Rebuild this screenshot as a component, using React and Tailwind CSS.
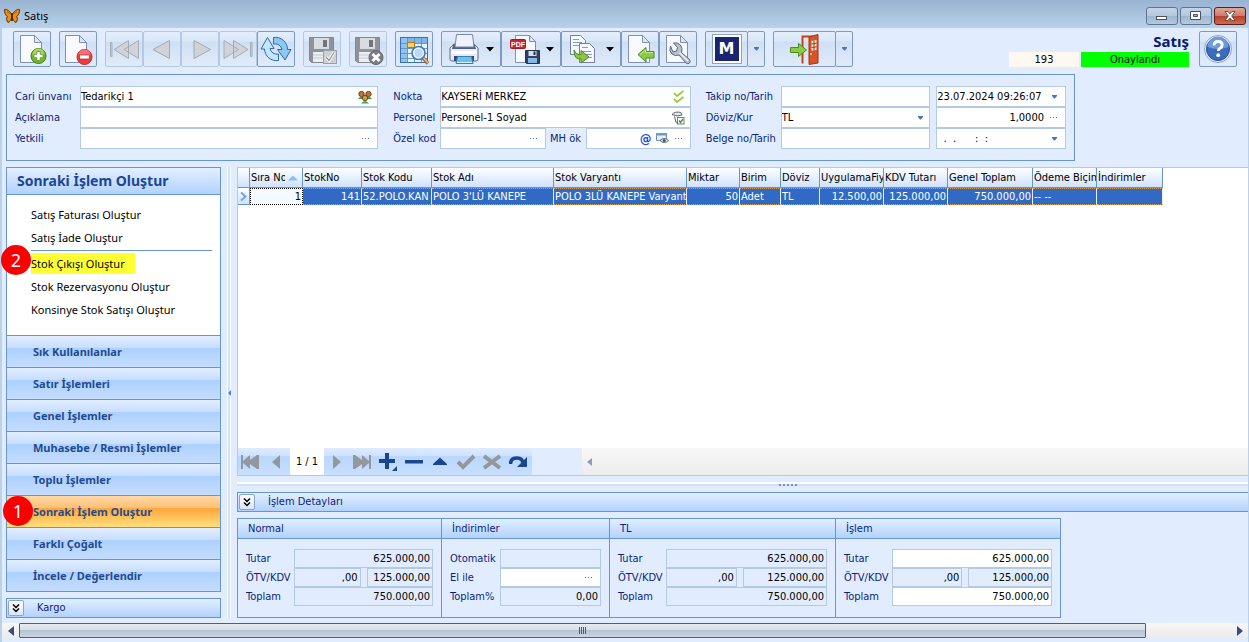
import React from "react";

const F_BORDER = "border-[#b4c9e4]";

/* ---------- toolbar drawings ---------- */

function Page({ x = 0 }) {
  return (
    <g transform={`translate(${x} 0)`}>
      <path d="M5.500 2.500h14l7 7v20h-21z" fill="#f7faff" stroke="#7f8fb5" />
      <path d="M19.500 2.500v7h7z" fill="#dfe6f5" stroke="#7f8fb5" strokeLinejoin="round" />
    </g>
  );
}

function Icon({ children, w = 32 }) {
  return (
    <svg width={w} height="32" viewBox={`0 0 ${w} 32`} fill="none" aria-hidden="true" className="shrink-0">
      {children}
    </svg>
  );
}

const NewIcon = () => (
  <Icon>
    <Page x={-1} />
    <circle cx="22.500" cy="23" r="7.500" fill="#76b82c" stroke="#3f7d16" />
    <path d="M16.500 21.500a6 6 0 0 1 12 0q-6 3-12 0z" fill="#a5d75c" />
    <path d="M20.800 18.500h3.400v2.800h2.800v3.400h-2.800v2.800h-3.400v-2.800h-2.800v-3.400h2.800z" fill="#fff" stroke="#4c8c1e" strokeWidth=".7" />
  </Icon>
);
const DeleteIcon = () => (
  <Icon>
    <Page x={-2} />
    <circle cx="22.500" cy="24" r="7.500" fill="#f23c41" stroke="#c9252a" />
    <path d="M16.500 22.500a6 6 0 0 1 12 0q-6 3-12 0z" fill="#ff7073" />
    <rect x="17.500" y="22" width="10" height="4" fill="#fff" stroke="#b22126" strokeWidth=".7" />
  </Icon>
);
const FirstIcon = () => (
  <Icon>
    <g fill="#d0d4da" stroke="#a6acb5" strokeLinejoin="round">
      <path d="M2.500 9.500h1.500v14H2.500z" />
      <path d="M20.500 7.500v18L6 16.500zM30.500 7.500v18L16 16.500z" />
    </g>
  </Icon>
);
const PrevIcon = () => (
  <Icon>
    <path d="M23.500 7.500v18L7 16.500z" fill="#cfd3d9" stroke="#a3a9b3" strokeLinejoin="round" />
  </Icon>
);
const NextIcon = () => (
  <Icon>
    <path d="M10 7.500v18l16.500-9z" fill="#cfd3d9" stroke="#a3a9b3" strokeLinejoin="round" />
  </Icon>
);
const LastIcon = () => (
  <Icon>
    <g fill="#d0d4da" stroke="#a6acb5" strokeLinejoin="round">
      <path d="M28.500 9.500H30v14h-1.500z" />
      <path d="M2 7.500v18l14.500-9zM11.500 7.500v18l14.500-9z" />
    </g>
  </Icon>
);
const RefreshIcon = () => (
  <Icon>
    <g fill="#8cc8ef" stroke="#2a6db0" strokeLinejoin="round">
      <path d="M13.500 4.500a12 12 0 0 1 14 12H31L25 27l-7.500-10.500H22A7 7 0 0 0 13.500 11z" />
      <path d="M18.500 27.500A12 12 0 0 1 4.500 16H1L7.500 4.500l6.500 11h-4a7 7 0 0 0 8.500 5.500z" fill="#c5e6fa" />
    </g>
  </Icon>
);
function Floppy({ children }) {
  return (
    <Icon>
      <path d="M3.500 4.500h24v25h-22l-2-2z" fill="#8d929b" stroke="#83878f" />
      <rect x="8" y="5" width="15" height="11" fill="#d9dce1" />
      <rect x="17" y="7" width="4" height="7" fill="#70757e" />
      <rect x="7" y="19" width="16" height="10" fill="#eceef1" />
      <path d="M7 22h16M7 25h16" stroke="#c6cad0" />
      {children}
    </Icon>
  );
}
const SaveOkIcon = () => (
  <Floppy>
    <rect x="17.500" y="17.500" width="13" height="13" fill="#cdd1d7" stroke="#9aa0a9" />
    <path d="M20 24l3 3.500 5-8" stroke="#fff" strokeWidth="3" />
    <path d="M20 24l3 3.500 5-8" stroke="#8a9099" strokeWidth="1.200" />
  </Floppy>
);
const SaveCancelIcon = () => (
  <Floppy>
    <circle cx="24" cy="24.500" r="7" fill="#7b7f86" stroke="#65696f" />
    <path d="M20.500 21l7 7m0-7l-7 7" stroke="#fff" strokeWidth="2.800" />
  </Floppy>
);
const GridSearchIcon = () => (
  <Icon>
    <rect x="2.500" y="4.500" width="27" height="25" fill="#eaf4fd" stroke="#3c6fae" />
    <rect x="3" y="5" width="26" height="5" fill="#7db6e8" />
    <rect x="3" y="5" width="6" height="24" fill="#8fc3ee" />
    <path d="M9.500 5v24M16.500 5v24M23.500 5v24M3 10.500h26M3 15.500h26M3 20.500h26M3 25.500h26" stroke="#5f97cf" />
    <rect x="9.500" y="9.500" width="7" height="5" fill="#ffcf6b" stroke="#b77a10" />
    <circle cx="20.500" cy="20" r="6.500" fill="#b7dbf7" stroke="#4a78b8" strokeWidth="1.600" />
    <circle cx="20.500" cy="20" r="4.800" stroke="#eef7ff" strokeWidth="1.200" />
    <path d="M25 25l5 5.500" stroke="#9c6a3d" strokeWidth="3.500" />
    <path d="M25.500 25l4.500 5" stroke="#f1b66a" strokeWidth="1.500" />
  </Icon>
);
const PrintIcon = () => (
  <Icon>
    <path d="M6 11h20l4 4v11q0 2-2 2H4q-2 0-2-2V15z" fill="#e7ebf5" stroke="#5d6b94" />
    <path d="M5.500 11h21l1.500 5H4z" fill="#515c80" />
    <path d="M8.500 1.500h16L26 14H7z" fill="#eef2fc" stroke="#7886ac" />
    <path d="M3 18h26v3H3z" fill="#fff" />
    <path d="M6 23h20v5H6z" fill="#3c4668" />
    <path d="M9.500 23.500h14l1.500 7H8z" fill="#6cc0f2" stroke="#3a7bb8" />
    <path d="M9 29.500h15" stroke="#d9f0ff" />
  </Icon>
);
const PdfIcon = () => (
  <Icon>
    <path d="M7.500 2.500h14l6 6v21h-20z" fill="#f6f9ff" stroke="#7f8fb5" />
    <path d="M21.500 2.500v6h6z" fill="#dfe6f5" stroke="#7f8fb5" />
    <rect x="2.500" y="6.500" width="15" height="9" rx="1" fill="#d2232a" stroke="#a8161c" />
    <text x="10" y="13.500" textAnchor="middle" fontSize="7" fontWeight="700" fill="#fff" className="font-['Liberation_Sans',sans-serif]">PDF</text>
    <path d="M17.500 17.500h14v13h-13l-1-1z" fill="#33405f" stroke="#26314d" />
    <rect x="20.500" y="18" width="8" height="5" fill="#d7deec" />
    <rect x="25.500" y="18.500" width="2" height="3.500" fill="#26314d" />
    <rect x="20" y="25" width="9" height="5" fill="#7fb9e6" />
  </Icon>
);
const TransferIcon = () => (
  <Icon>
    <g fill="#f6f9ff" stroke="#6f7fa8">
      <path d="M2.500 2.500h10l5 5v14h-15z" />
      <path d="M11.500 10.500h10l5 5v14h-15z" />
    </g>
    <path d="M5 6.500h6M5 9.500h9M5 12.500h6M14 14.500h6M14 18.500h9M18 21.500h6M18 24.500h6" stroke="#7d9bd0" />
    <path d="M6 17q2 5 7 4.500v-4l8 6.500-8 6v-4Q6 27 6 17z" fill="#8cc63e" stroke="#4e8a1a" />
  </Icon>
);
const ImportIcon = () => (
  <Icon>
    <Page x={-1} />
    <path d="M14 21.500l8-7v4h8v6.500h-8v4z" fill="#8ecb45" stroke="#4c8a1c" strokeLinejoin="round" />
    <path d="M16 21.500l5.500-4.500v2.500H29" stroke="#c7ea93" />
  </Icon>
);
const WrenchIcon = () => (
  <Icon>
    <path d="M4.500 2.500h14l7 7v20h-21z" fill="#f7faff" stroke="#7f8fb5" />
    <path d="M18.500 2.500v7h7z" fill="#dfe6f5" stroke="#7f8fb5" />
    <path d="M8.500 13q-2 5 1.500 8 3 2.500 7 1l7 8q2 1.500 3.500 0t0-3.500l-8-7q1.500-4-1-7.500-3-3-7-2l4 4.500-1 3.500-3.500 1z" fill="#b9c1cf" stroke="#5e6880" strokeLinejoin="round" />
    <path d="M17.500 19.500l8.500 8.500" stroke="#e9edf4" strokeWidth="1.500" />
  </Icon>
);
const DoorIcon = () => (
  <Icon>
    <path d="M13.500 30.500V3.500h15" stroke="#c8401c" strokeWidth="2" />
    <path d="M20 30.500V4l9-2.500v28.500l-9 1.500z" fill="#d8532a" stroke="#a8330f" />
    <path d="M22.500 8l5-1v10l-5 .8z" fill="#f7ead9" />
    <path d="M25 7.500v10M22.500 11l5-.8M22.500 14.500l5-.7" stroke="#a8330f" />
    <circle cx="22" cy="21" r="1" fill="#f7d9a9" />
    <path d="M1.500 14.500h8V10.500l8 6.500-8 6.500v-4h-8z" fill="#8ecb45" stroke="#4c8a1c" strokeLinejoin="round" />
  </Icon>
);
const HelpIcon = () => (
  <Icon>
    <circle cx="16" cy="16" r="13.500" fill="#e6eefb" stroke="#8aa3cf" />
    <circle cx="16" cy="16" r="11.500" fill="#3a6dbb" stroke="#1f4b92" />
    <path d="M5.500 14a10.500 10.500 0 0 1 21 0q-10 4-21 0z" fill="#6e9ad8" />
    <path d="M12 12.500q0-4 4.200-4 4 0 4 3.500 0 2-2.200 3.200-1.800 1-1.800 2.800" stroke="#fff" strokeWidth="2.800" />
    <circle cx="16.200" cy="22.200" r="1.900" fill="#fff" />
  </Icon>
);

const Butterfly = () => (
  <svg width="16" height="16" viewBox="0 0 16 16" aria-hidden="true" className="shrink-0">
    <path d="M8 7C6 3 3 1 .5 1.500c0 3 1 6 3 7-1.500 1.500-1 4.500.5 6 2-.5 3.500-3 4-6 .5 3 2 5.500 4 6 1.500-1.500 2-4.500.5-6 2-1 3-4 3-7C13 1 10 3 8 7z" fill="#f08c12" stroke="#5a3208" strokeWidth="1" />
    <path d="M8 7L3 3.500M8 7l5-3.500" stroke="#a35708" strokeWidth=".8" />
    <path d="M8 5v8" stroke="#3b2206" strokeWidth="1.600" />
  </svg>
);

/* ---------- small controls ---------- */

function Tri({ className }) {
  return (
    <svg width="8" height="5" viewBox="0 0 8 5" aria-hidden="true" className={"shrink-0 " + className}>
      <path d="M0 0h8L4 4.500z" fill="currentColor" />
    </svg>
  );
}

function SmallTri() {
  return (
    <svg width="5" height="4" viewBox="0 0 5 4" aria-hidden="true" className="shrink-0 text-[#4a77b4]">
      <path d="M0 0h5v1L3 3.500H2L0 1z" fill="currentColor" />
    </svg>
  );
}

const TOOL = "flex h-9 items-center justify-center rounded-[2px] border bg-[linear-gradient(#e4eefb,#dae7f8_26%,#cfdff3_30%,#e0ebfa)] ";

function Tool({ label, icon, disabled }) {
  return (
    <button
      type="button"
      aria-label={label}
      disabled={disabled}
      className={TOOL + "w-[38px] " + (disabled ? "border-[#b5c8e3]" : "border-[#7d9ac6]")}
    >
      {icon}
    </button>
  );
}

function MenuTool({ label, icon }) {
  return (
    <button type="button" aria-label={label} aria-haspopup="menu" className={TOOL + "w-[60px] gap-[6px] border-[#7d9ac6]"}>
      {icon}
      <Tri className="text-black" />
    </button>
  );
}

function SplitTool({ label, icon, width }) {
  return (
    <div className="flex">
      <button type="button" aria-label={label} className={TOOL + "border-[#7d9ac6] " + width}>
        {icon}
      </button>
      <button type="button" aria-label={label + " seçenekleri"} className={TOOL + "-ml-px w-[18px] border-[#7d9ac6]"}>
        <SmallTri />
      </button>
    </div>
  );
}

const Dots = () => (
  <svg width="8" height="2" viewBox="0 0 8 2" aria-hidden="true">
    <path d="M0 0h1v1H0zM3 0h1v1H3zM6 0h1v1H6z" fill="#4a77b4" />
  </svg>
);

const PeopleIcon = () => (
  <svg width="14" height="14" viewBox="0 0 14 14" aria-hidden="true">
    <path d="M0 9q3-4 6 0zM8 9q3-4 6 0z" fill="#2e9b2e" />
    <path d="M3 13.500q4-5 8 0z" fill="#3caa34" />
    <circle cx="3.500" cy="4" r="2.700" fill="#b8763a" stroke="#5a3210" strokeWidth=".8" />
    <circle cx="10.500" cy="4" r="2.700" fill="#b8763a" stroke="#5a3210" strokeWidth=".8" />
    <circle cx="7" cy="8" r="2.700" fill="#d09850" stroke="#5a3210" strokeWidth=".8" />
  </svg>
);
const ChecksIcon = () => (
  <svg width="12" height="14" viewBox="0 0 12 14" fill="none" aria-hidden="true">
    <path d="M1 3l3 3 6.500-5M1 9l3 3 6.500-5" stroke="#9ccb4a" strokeWidth="1.800" />
  </svg>
);
const UserCheckIcon = () => (
  <svg width="14" height="14" viewBox="0 0 14 14" fill="none" aria-hidden="true">
    <path d="M1 3.500Q4 0 10 1.500l1 2.500-5 1zM3.500 5.500l1.500 6 2 1" fill="#e3e6ea" stroke="#5f6670" />
    <rect x="6.500" y="6.500" width="6.500" height="6.500" fill="#fff" stroke="#6f7a8c" />
    <path d="M8 9.500l1.500 2L12 8" stroke="#3f9a1e" strokeWidth="1.400" />
  </svg>
);
const CardEyeIcon = () => (
  <svg width="13" height="11" viewBox="0 0 13 11" fill="none" aria-hidden="true">
    <path d="M.5.500h10v7H.5z" fill="#e8f1fb" stroke="#6b8fbf" />
    <path d="M0 0h11v2.500H0z" fill="#6b9ad0" />
    <path d="M4 7.500q4-4 8.500 0-4.500 4-8.500 0z" fill="#f3f5f8" stroke="#5d6678" />
    <circle cx="8.200" cy="7.500" r="1.500" fill="#4a5468" />
  </svg>
);

function Field({ id, label, value = "", right, soft, short, children, className = "" }) {
  return (
    <div
      className={`flex min-w-0 items-center gap-1 border ${F_BORDER} ${short ? "h-[19px]" : "h-[21px]"} ${
        children ? "pr-[5px]" : "pr-[2px]"
      } ${soft ? "bg-[#e1edfe]" : "bg-white"} ${className}`}
    >
      <input
        id={id}
        type="text"
        aria-label={label}
        defaultValue={value}
        className={"h-full w-full min-w-0 flex-1 bg-transparent text-black outline-none " + (right ? "text-right" : "")}
      />
      {children}
    </div>
  );
}

function Mini({ label, children }) {
  return (
    <button type="button" aria-label={label} className="flex h-4 min-w-3 shrink-0 items-center justify-center">
      {children}
    </button>
  );
}

function L({ htmlFor, short, children }) {
  return (
    <label htmlFor={htmlFor} className={"flex items-center whitespace-nowrap text-[#0b1f7a] " + (short ? "h-[19px]" : "h-[21px]")}>
      {children}
    </label>
  );
}

const Expand = ({ label }) => (
  <button type="button" aria-label={label} className="flex size-4 items-center justify-center rounded-[2px] border border-[#8aa5cc] bg-linear-to-b from-white to-[#d9e6f8]">
    <svg width="8" height="9" viewBox="0 0 8 9" fill="none" aria-hidden="true">
      <path d="M1 .5l3 3 3-3M1 4.500l3 3 3-3" stroke="#000" strokeWidth="1.500" />
    </svg>
  </button>
);

/* ---------- header form ---------- */

function HeaderForm() {
  return (
    <section className="mx-1 flex w-full max-w-[1069px] border border-[#6695d0] px-2 py-[11px]">
      <div className="grid flex-[364] grid-cols-[65px_1fr]">
        <L htmlFor="cari">Cari ünvanı</L>
        <Field id="cari" value="Tedarikçi 1"><Mini label="Cari seç"><PeopleIcon /></Mini></Field>
        <L htmlFor="aciklama">Açıklama</L>
        <Field id="aciklama" />
        <L htmlFor="yetkili">Yetkili</L>
        <Field id="yetkili"><Mini label="Yetkili seç"><Dots /></Mini></Field>
      </div>
      <div className="ml-[15px] grid flex-[298] grid-cols-[47px_1fr]">
        <L htmlFor="nokta">Nokta</L>
        <Field id="nokta" value="KAYSERİ MERKEZ"><Mini label="Nokta seç"><ChecksIcon /></Mini></Field>
        <L htmlFor="personel">Personel</L>
        <Field id="personel" value="Personel-1 Soyad"><Mini label="Personel seç"><UserCheckIcon /></Mini></Field>
        <L htmlFor="ozel">Özel kod</L>
        <div className="flex">
          <Field id="ozel" className="flex-1"><Mini label="Özel kod seç"><Dots /></Mini></Field>
          <div className="flex w-10 justify-center"><L htmlFor="mh">MH ök</L></div>
          <Field id="mh" className="flex-1">
            <Mini label="E-posta"><span className="text-[13px] leading-4 font-bold text-[#2448e0]">@</span></Mini>
            <Mini label="Göster"><CardEyeIcon /></Mini>
            <Mini label="MH ök seç"><Dots /></Mini>
          </Field>
        </div>
      </div>
      <div className="ml-[15px] grid flex-[361] grid-cols-[75px_156fr_130fr]">
        <L htmlFor="takip">Takip no/Tarih</L>
        <Field id="takip" className="mr-[6px]" />
        <Field label="Takip tarihi" value="23.07.2024 09:26:07"><Mini label="Tarih seç"><SmallTri /></Mini></Field>
        <L htmlFor="doviz">Döviz/Kur</L>
        <div className={`mr-[6px] flex h-[21px] min-w-0 items-center border bg-white pr-[6px] ${F_BORDER}`}>
          <select id="doviz" defaultValue="TL" className="h-full min-w-0 flex-1 appearance-none bg-transparent text-black outline-none">
            <option>TL</option>
          </select>
          <SmallTri />
        </div>
        <Field label="Kur" value="1,0000" right><Mini label="Kur seç"><Dots /></Mini></Field>
        <L htmlFor="belge">Belge no/Tarih</L>
        <Field id="belge" className="mr-[6px]" />
        <Field label="Belge tarihi" value="  .  .      :  :"><Mini label="Belge tarihi seç"><SmallTri /></Mini></Field>
      </div>
    </section>
  );
}

/* ---------- side bar ---------- */

const GROUPS = [
  "Sık Kullanılanlar",
  "Satır İşlemleri",
  "Genel İşlemler",
  "Muhasebe / Resmi İşlemler",
  "Toplu İşlemler",
  "Sonraki İşlem Oluştur",
  "Farklı Çoğalt",
  "İncele / Değerlendir",
];

function Callout({ n, className }) {
  return (
    <span className={"absolute flex size-[30px] items-center justify-center rounded-full bg-[#fb0000] text-[18px] font-normal text-white " + className}>
      {n}
    </span>
  );
}

const LINK = "block text-left leading-[23px] text-black";

function Sidebar() {
  return (
    <aside className="flex w-[215px] shrink-0 flex-col gap-[6px]">
      <div className="flex flex-1 flex-col border border-[#6695d0] bg-white font-['Noto_Sans',sans-serif]">
        <h2 className="border-b border-[#6695d0] bg-linear-to-b from-[#e3effe] to-[#b1d2fe] px-[10px] text-[14px] leading-[26px] font-bold text-[#1c4695]">
          Sonraki İşlem Oluştur
        </h2>
        <nav className="flex-1 pt-2 pr-2 pl-6">
          <a href="#fatura" className={LINK}>Satış Faturası Oluştur</a>
          <a href="#iade" className={LINK}>Satış İade Oluştur</a>
          <div className="relative mt-px border-t border-[#6695d0] pt-[2px]">
            <a href="#cikis" className="block w-[104px] bg-[#ffff33] leading-[21px] whitespace-nowrap text-black">Stok Çıkışı Oluştur</a>
            <Callout n="2" className="-top-[6px] -left-[30px]" />
          </div>
          <a href="#rezervasyon" className={LINK + " mt-px"}>Stok Rezervasyonu Oluştur</a>
          <a href="#konsinye" className={LINK}>Konsinye Stok Satışı Oluştur</a>
        </nav>
        {GROUPS.map((g) => {
          const active = g === "Sonraki İşlem Oluştur";
          return (
            <button
              key={g}
              type="button"
              className={
                "relative h-8 border-t border-[#6695d0] pl-[26px] text-left font-bold text-[#1f4c8f] " +
                (active
                  ? "bg-[linear-gradient(#ffd9a6,#ffc076_38%,#ffa63c_40%,#ffdf7c)]"
                  : "bg-[linear-gradient(#e2eefe,#c8defe_38%,#aed0fe_40%,#c5ddfe)]")
              }
            >
              {g}
              {active && <Callout n="1" className="top-0 -left-[4px]" />}
            </button>
          );
        })}
      </div>
      <div className="flex h-5 items-center gap-[13px] border border-[#6695d0] bg-linear-to-b from-[#e3effe] to-[#b1d2fe] pl-px text-[#0b1f7a]">
        <Expand label="Kargo bölümünü aç" />
        Kargo
      </div>
    </aside>
  );
}

/* ---------- stock table ---------- */

const COLS = [
  ["Sıra No", "w-[53px]", "1", true],
  ["StokNo", "w-[59px]", "141", true],
  ["Stok Kodu", "w-[70px]", "52.POLO.KAN", false],
  ["Stok Adı", "w-[122px]", "POLO 3'LÜ KANEPE", false],
  ["Stok Varyantı", "w-[133px]", "POLO 3LÜ KANEPE Varyant", false],
  ["Miktar", "w-[53px]", "50", true],
  ["Birim", "w-[41px]", "Adet", false],
  ["Döviz", "w-[39px]", "TL", false],
  ["UygulamaFiy", "w-[64px]", "12.500,00", true],
  ["KDV Tutarı", "w-[64px]", "125.000,00", true],
  ["Genel Toplam", "w-[85px]", "750.000,00", true],
  ["Ödeme Biçim", "w-[64px]", "-- --", false],
  ["İndirimler", "w-[66px]", "", false],
];

const HEAD = "border-r border-b border-[#6695d0] bg-linear-to-b from-white to-[#cfe2fd] p-0 ";

function StockTable() {
  return (
    <table className="w-[925px] table-fixed border-separate border-spacing-0 text-black">
      <thead>
        <tr className="h-5">
          <th aria-label="Satır" className={HEAD + "w-3"} />
          {COLS.map(([h, w], i) => (
            <th key={h} className={HEAD + "text-left font-normal " + w}>
              <div className="flex items-center pl-px">
                <span className="min-w-0 flex-1 overflow-hidden whitespace-nowrap">{h}</span>
                {i === 0 && (
                  <svg width="17" height="6" viewBox="0 0 17 6" aria-hidden="true" className="shrink-0">
                    <path d="M3 5.500h10L8 .5z" fill="#8dbcf5" />
                  </svg>
                )}
              </div>
            </th>
          ))}
        </tr>
      </thead>
      <tbody>
        <tr className="h-[17px]">
          <td className={HEAD}>
            <svg width="11" height="11" viewBox="0 0 11 11" fill="none" aria-hidden="true">
              <path d="M3 1.500L7.500 5.500 3 9.500" stroke="#6fa4ea" strokeWidth="2" />
            </svg>
          </td>
          {COLS.map(([h, , v, right], i) => (
            <td
              key={h}
              className={
                "overflow-hidden border-y border-dotted px-px py-0 leading-[15px] whitespace-nowrap " +
                (i === 0
                  ? "border-x border-black bg-[#f5faff] text-black "
                  : "border-r border-y-[#d9a05a] border-r-[#e6effb] bg-[#316ac5] text-white [border-right-style:solid] ") +
                (right ? "text-right" : "text-left")
              }
            >
              {v}
            </td>
          ))}
        </tr>
      </tbody>
    </table>
  );
}

function NavBtn({ label, children, w = "w-[26px]" }) {
  return (
    <button type="button" aria-label={label} className={"flex h-full items-center justify-center " + w}>
      <svg width="20" height="20" viewBox="0 0 20 20" fill="none" aria-hidden="true">{children}</svg>
    </button>
  );
}

function Navigator() {
  const G = "#94979c";
  const B = "#1a4591";
  const bg = "flex h-full bg-[linear-gradient(#dfecfe,#cfe2fe_28%,#bad7fe_32%,#c8dffe)] ";
  return (
    <div className="flex h-[27px] items-center">
      <div className={bg + "w-[52px]"}>
        <NavBtn label="İlk"><path d="M0 3h2v6l7-6v5l7-5h2v14h-2l-7-5v5l-7-6v6H0z" fill={G} /></NavBtn>
        <NavBtn label="Önceki"><path d="M13 3v14L5 10z" fill={G} /></NavBtn>
      </div>
      <span className="w-[34px] text-center text-black">1 / 1</span>
      <div className={bg + "w-[208px]"}>
        <NavBtn label="Sonraki"><path d="M6 3v14l8-7z" fill={G} /></NavBtn>
        <NavBtn label="Son"><path d="M18 3h-2v6L9 3v5L2 3H0v14h2l7-5v5l7-6v6h2z" fill={G} /></NavBtn>
        <NavBtn label="Ekle"><path d="M6 1h4v6h6v4h-6v6H6v-6H0V7h6zM18 14v5h-5z" fill={B} /></NavBtn>
        <NavBtn label="Sil"><path d="M0 8h18v3.500H0z" fill={B} /></NavBtn>
        <NavBtn label="Düzenle"><path d="M9 5.500l7 6.500v1H2v-1z" fill={B} /></NavBtn>
        <NavBtn label="Onayla"><path d="M1 10l5 5L17 4" stroke={G} strokeWidth="4" /></NavBtn>
        <NavBtn label="İptal"><path d="M1 4l16 12M17 4L1 16" stroke={G} strokeWidth="4" /></NavBtn>
        <NavBtn label="Yenile">
          <path d="M1.500 12q0-6 6.500-6 6 0 6 6" stroke={B} strokeWidth="3.500" />
          <path d="M18 5v10H8z" fill={B} />
        </NavBtn>
      </div>
      <div className="h-full w-[50px] bg-[#e1edfe]" />
      <div className="flex h-full flex-1 items-center bg-linear-to-b from-[#f8f8f8] to-[#ececec] pl-[5px]">
        <svg width="5" height="8" viewBox="0 0 5 8" aria-hidden="true"><path d="M5 0v8L0 4z" fill="#8e9cc2" /></svg>
      </div>
    </div>
  );
}

/* ---------- totals ---------- */

function Box({ title, w, cols, children }) {
  return (
    <section className={"-mr-px flex flex-col border border-[#6695d0] " + w}>
      <h3 className="h-5 border-b border-[#6695d0] bg-linear-to-b from-[#e3effe] to-[#b1d2fe] pl-[10px] leading-[19px] text-[#0b1f7a]">{title}</h3>
      <div className={"grid px-2 pt-[10px] pb-[11px] " + cols}>{children}</div>
    </section>
  );
}

function Totals({ title, white, w, split = "flex-[84]" }) {
  return (
    <Box title={title} w={w} cols="grid-cols-[48px_1fr]">
      <L short htmlFor={title + "-tutar"}>Tutar</L>
      <Field short id={title + "-tutar"} value="625.000,00" right soft={!white} />
      <L short htmlFor={title + "-otv"}>ÖTV/KDV</L>
      <div className="flex gap-[6px]">
        <Field short id={title + "-otv"} value=",00" right soft className="flex-[70]" />
        <Field short label={title + " KDV"} value="125.000,00" right soft className={split} />
      </div>
      <L short htmlFor={title + "-toplam"}>Toplam</L>
      <Field short id={title + "-toplam"} value="750.000,00" right soft={!white} />
    </Box>
  );
}

function Discounts() {
  return (
    <Box title="İndirimler" w="w-[169px]" cols="grid-cols-[50px_1fr]">
      <L short htmlFor="oto">Otomatik</L>
      <Field short id="oto" soft />
      <L short htmlFor="elile">El ile</L>
      <Field short id="elile"><Mini label="El ile seç"><Dots /></Mini></Field>
      <L short htmlFor="yuzde">Toplam%</L>
      <Field short id="yuzde" value="0,00" right soft />
    </Box>
  );
}

/* ---------- window ---------- */

const WIN = "flex h-[18px] w-8 items-center justify-center rounded-[3px] border ";

export default function App() {
  return (
    <div className="flex min-h-screen flex-col bg-[#b9d1ea] font-['DejaVu_Sans_Condensed','Noto_Sans',sans-serif] text-[11px] leading-[14px]">
      <header className="flex h-7 items-end gap-1 bg-linear-to-b from-[#99b4d1] to-[#b9d1ea] pr-[3px] pl-1">
        <div className="flex h-6 flex-1 items-center gap-1">
          <Butterfly />
          <h1 className="font-['Noto_Sans',sans-serif] text-black">Satış</h1>
        </div>
        <div className="flex gap-[2px] pb-[3px]">
          <button type="button" aria-label="Küçült" className={WIN + "border-[#5d7590] bg-[linear-gradient(#c3d4e6,#b4c8de_50%,#9db5cf_50%,#b5cade)]"}>
            <svg width="12" height="10" viewBox="0 0 12 10" aria-hidden="true"><rect x=".5" y="5.500" width="10" height="3" fill="#fff" stroke="#4a525e" /></svg>
          </button>
          <button type="button" aria-label="Ekranı kapla" className={WIN + "border-[#5d7590] bg-[linear-gradient(#c3d4e6,#b4c8de_50%,#9db5cf_50%,#b5cade)]"}>
            <svg width="12" height="10" viewBox="0 0 12 10" aria-hidden="true"><path d="M.5.500h10v8H.5z" fill="#fff" stroke="#4a525e" /><path d="M3.500 3.500h4v2h-4z" fill="#9db5cf" stroke="#4a525e" /></svg>
          </button>
          <button type="button" aria-label="Kapat" className={WIN + "border-[#5b1f1a] bg-[linear-gradient(#e0a598,#d07a68_50%,#b8402c_50%,#d06a4c)]"}>
            <svg width="12" height="10" viewBox="0 0 12 10" aria-hidden="true"><path d="M1 .5h3l2 2.500L8 .5h3L7.700 5 11 9.500H8L6 7 4 9.500H1L4.300 5z" fill="#fff" stroke="#4d3a40" strokeWidth=".8" /></svg>
          </button>
        </div>
      </header>

      <main className="mr-px ml-[2px] flex flex-1 flex-col bg-[#e1edfe]">
        <div className="flex items-center gap-2 pt-[3px] pr-[11px] pb-[7px] pl-[11px]">
          <Tool label="Yeni" icon={<NewIcon />} />
          <Tool label="Sil" icon={<DeleteIcon />} />
          <div className="flex">
            <Tool label="İlk kayıt" icon={<FirstIcon />} disabled />
            <Tool label="Önceki kayıt" icon={<PrevIcon />} disabled />
            <Tool label="Sonraki kayıt" icon={<NextIcon />} disabled />
            <Tool label="Son kayıt" icon={<LastIcon />} disabled />
            <Tool label="Yenile" icon={<RefreshIcon />} />
          </div>
          <Tool label="Kaydet" icon={<SaveOkIcon />} disabled />
          <Tool label="Vazgeç" icon={<SaveCancelIcon />} disabled />
          <Tool label="Listele" icon={<GridSearchIcon />} />
          <div className="flex">
            <MenuTool label="Yazdır" icon={<PrintIcon />} />
            <MenuTool label="PDF kaydet" icon={<PdfIcon />} />
            <MenuTool label="Aktar" icon={<TransferIcon />} />
            <Tool label="İçeri al" icon={<ImportIcon />} />
            <Tool label="Ayarlar" icon={<WrenchIcon />} />
          </div>
          <SplitTool
            label="M"
            width="w-[43px]"
            icon={
              <span className="flex size-[30px] items-center justify-center border border-[#8fa3c8] bg-white">
                <span className="flex size-6 items-center justify-center bg-[#1b2470] font-['DejaVu_Sans',sans-serif] text-[16px] font-bold text-white">M</span>
              </span>
            }
          />
          <SplitTool label="Çıkış" width="w-[63px]" icon={<DoorIcon />} />
          <div className="mr-[2px] ml-auto flex flex-col items-end">
            <strong className="font-['Noto_Sans',sans-serif] text-[15px] leading-[21px] text-[#0a1a6e]">Satış</strong>
            <div className="flex gap-[2px] text-center leading-[15px] text-black">
              <span className="w-[70px] bg-[#fdf9f0]">193</span>
              <span className="w-[108px] bg-[#00ff00]">Onaylandı</span>
            </div>
          </div>
          <Tool label="Yardım" icon={<HelpIcon />} />
        </div>

        <HeaderForm />

        <div className="mt-[6px] flex flex-1">
          <div className="flex pl-1">
            <Sidebar />
          </div>
          <div className="flex w-4 items-center justify-center">
            <div className="flex h-full w-1 items-center border-x border-white bg-[#cfe1fb]">
              <svg width="4" height="6" viewBox="0 0 4 6" aria-hidden="true" className="shrink-0"><path d="M3 0v6L0 3z" fill="#4a86d8" /></svg>
            </div>
          </div>
          <div className="flex min-w-0 flex-1 flex-col">
            <div className={`flex flex-1 flex-col border border-r-0 bg-white ${F_BORDER}`}>
              <div className="min-w-0 flex-1 overflow-hidden">
                <StockTable />
              </div>
              <Navigator />
            </div>
            <div className="my-[6px] flex h-1 items-center justify-center border-t-2 border-white bg-[#cfe1fb] pl-[90px]">
              <svg width="20" height="3" viewBox="0 0 20 3" aria-hidden="true" className="shrink-0"><path d="M1 0h2v2H1zM5 0h2v2H5zM9 0h2v2H9zM13 0h2v2h-2zM17 0h2v2h-2z" fill="#6695d0" /></svg>
            </div>
            <div className="flex h-5 items-center gap-[13px] border border-r-0 border-[#6695d0] bg-linear-to-b from-[#e3effe] to-[#b1d2fe] pl-px text-[#0b1f7a]">
              <Expand label="İşlem detaylarını daralt" />
              İşlem Detayları
            </div>
            <div className="mt-[6px] flex">
              <Totals title="Normal" w="w-[205px]" split="flex-[70]" />
              <Discounts />
              <Totals title="TL" w="w-[227px]" />
              <Totals title="İşlem" white w="w-[226px]" />
            </div>
          </div>
        </div>

        <div className="mt-[5px] mb-1 flex h-[15px] items-center bg-linear-to-b from-[#f7f7f7] to-[#ebebeb]">
          <button type="button" aria-label="Sola kaydır" className="flex w-[17px] justify-center">
            <svg width="6" height="10" viewBox="0 0 6 10" aria-hidden="true"><path d="M6 0v10L0 5z" fill="#3d4b78" /></svg>
          </button>
          <div className="flex h-full flex-1">
            <div className="flex h-full w-[93%] items-center justify-center rounded-[1px] border border-[#4d5f82] bg-[linear-gradient(#e9ebee,#d8dfe7_45%,#b4c2d3_50%,#ccd6e2)]">
              <svg width="8" height="7" viewBox="0 0 8 7" aria-hidden="true"><path d="M0 0h1v7H0zM2 0h1v7H2zM4 0h1v7H4zM6 0h1v7H6z" fill="#4d5878" /></svg>
            </div>
          </div>
          <button type="button" aria-label="Sağa kaydır" className="flex w-[17px] justify-center">
            <svg width="6" height="10" viewBox="0 0 6 10" aria-hidden="true"><path d="M0 0v10l6-5z" fill="#3d4b78" /></svg>
          </button>
        </div>
      </main>
    </div>
  );
}
